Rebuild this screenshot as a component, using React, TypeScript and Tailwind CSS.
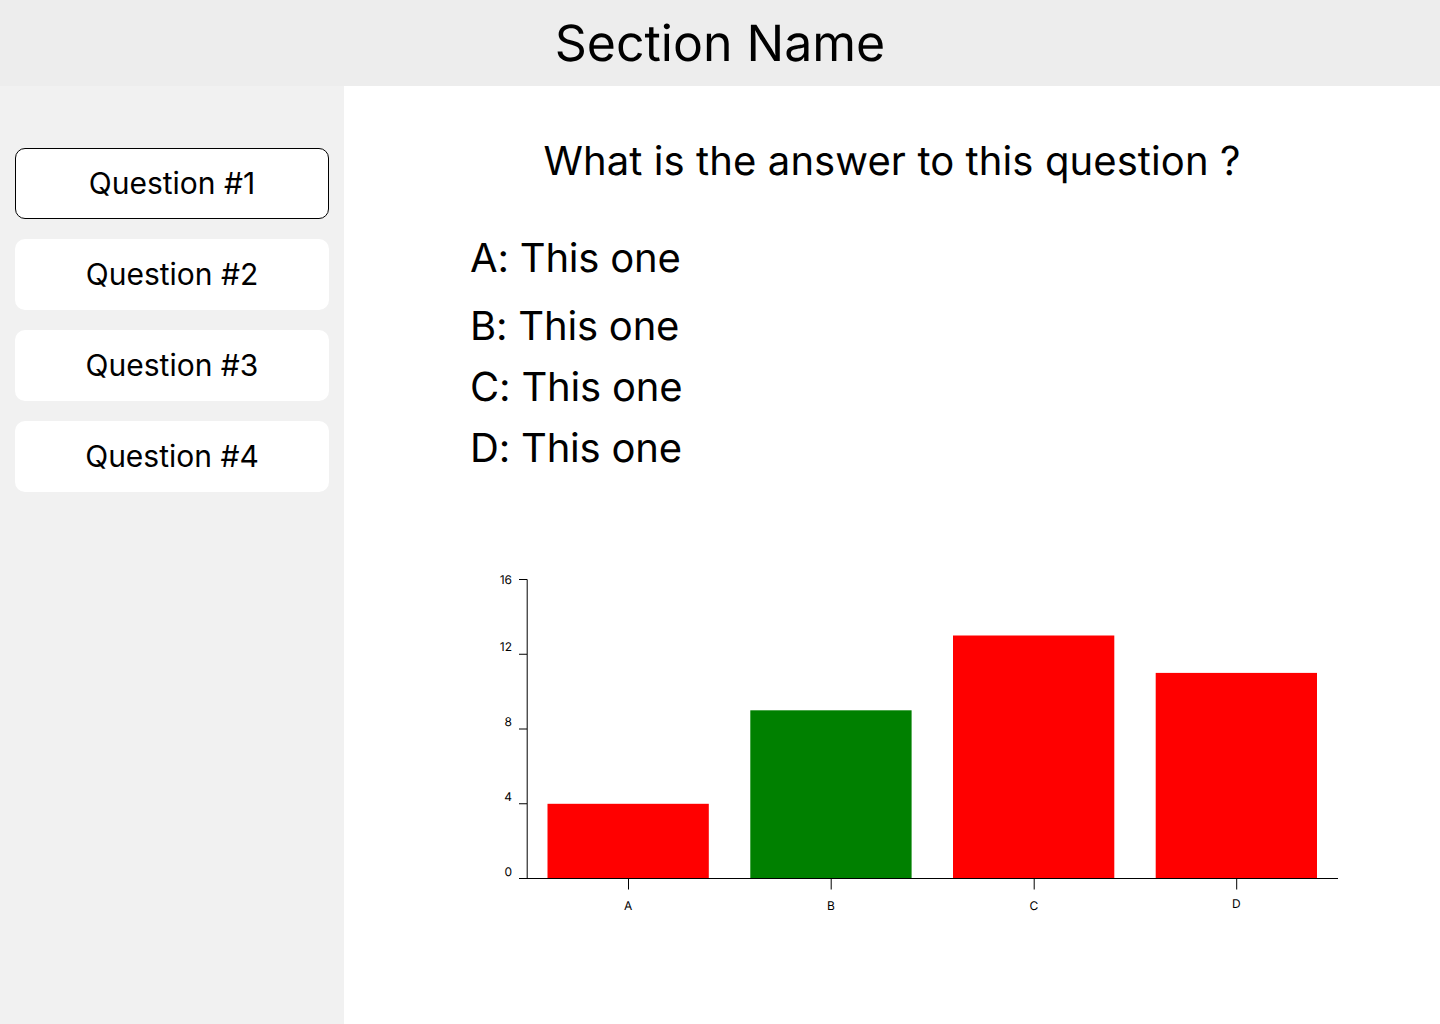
const questions = ['Question #1', 'Question #2', 'Question #3', 'Question #4'];

const bars = [
  { x: 547.5, y: 803.8, fill: '#ff0000' },
  { x: 750.3, y: 710.3, fill: '#008000' },
  { x: 953, y: 635.5, fill: '#ff0000' },
  { x: 1155.7, y: 672.9, fill: '#ff0000' },
];

const ticks = [
  { y: 579.5, label: '16', ty: 584 },
  { y: 654.25, label: '12', ty: 651 },
  { y: 729, label: '8', ty: 726 },
  { y: 803.75, label: '4', ty: 801 },
  { y: 878.5, label: '0', ty: 876 },
];

const categories = [
  { x: 628.5, label: 'A', ty: 910 },
  { x: 831.2, label: 'B', ty: 910 },
  { x: 1034.2, label: 'C', ty: 910 },
  { x: 1236.7, label: 'D', ty: 908 },
];

function AnswerChart() {
  return (
    <svg className="mt-[91px] ml-[146px] block" width="860" height="360" viewBox="490 563 860 360" fontSize="12">
      {bars.map((b) => (
        <rect key={b.x} x={b.x} y={b.y} width="161.3" height={878.5 - b.y} fill={b.fill} />
      ))}
      <path d="M519 579.5H527.2V878.5M519 878.5H1338" fill="none" stroke="#000" />
      {ticks.slice(1, 4).map((t) => (
        <path key={t.label} d={`M519 ${t.y}H527`} stroke="#000" />
      ))}
      {ticks.map((t) => (
        <text key={t.label} x="512" y={t.ty} textAnchor="end">{t.label}</text>
      ))}
      {categories.map((c) => (
        <g key={c.label}>
          <path d={`M${c.x} 878.5V889.5`} stroke="#000" />
          <text x={c.x - 0.3} y={c.ty} textAnchor="middle">{c.label}</text>
        </g>
      ))}
    </svg>
  );
}

export default function App() {
  return (
    <div className="flex h-[1024px] w-[1440px] flex-col overflow-hidden bg-white font-['Inter',sans-serif] text-black [text-rendering:geometricPrecision]">
      <header className="flex h-[86px] shrink-0 items-center justify-center bg-[#ededed] pt-0.5">
        <h1 className="text-[50px] leading-[60px]">Section Name</h1>
      </header>
      <div className="flex min-h-0 flex-1">
        <nav className="flex w-[344px] shrink-0 flex-col gap-5 bg-[#f1f1f1] px-[15px] pt-[62px]">
          {questions.map((q, i) => (
            <button
              key={q}
              className={`flex h-[71px] shrink-0 items-center justify-center rounded-[10px] bg-white pb-0.5 text-[30px] leading-9 ${i === 0 ? 'border border-black' : ''}`}
            >
              {q}
            </button>
          ))}
        </nav>
        <main className="flex-1">
          <h2 className="pt-[51px] text-center text-[40px] leading-[48px] tracking-[0.1px]">What is the answer to this question ?</h2>
          <div className="mt-[49px] ml-[126px] text-[40px] leading-[48px] tracking-[-0.2px]">
            <p>A: This one</p>
            <p className="mt-5">B: This one</p>
            <p className="mt-[13px]">C: This one</p>
            <p className="mt-[13px]">D: This one</p>
          </div>
          <AnswerChart />
        </main>
      </div>
    </div>
  );
}
